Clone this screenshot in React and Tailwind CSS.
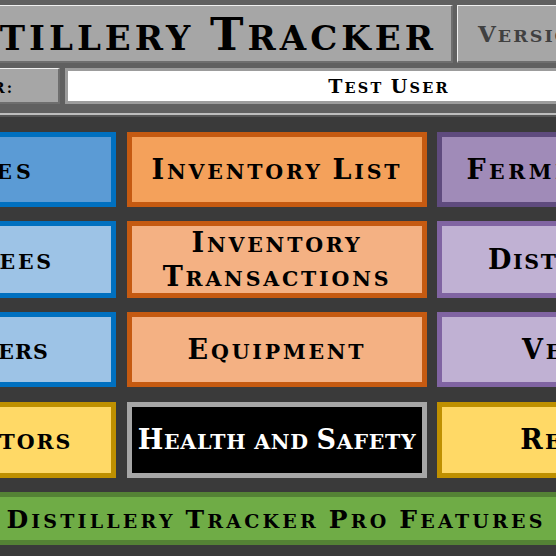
import React from 'react';

const serif = "font-['DejaVu_Serif',serif] font-bold";

// Copperplate-like small caps: first letter of a capitalised word is full size, the rest is uppercase at a smaller size
function SC({ text, big, small }) {
  const words = text.split(' ');
  return (
    <span>
      {words.map((w, i) => {
        const head = w[0] === w[0].toUpperCase() ? w[0] : '';
        const rest = head ? w.slice(1) : w;
        return (
          <React.Fragment key={i}>
            {i > 0 && <span className={small}> </span>}
            {head && <span className={big}>{head}</span>}
            <span className={`uppercase ${small}`}>{rest}</span>
          </React.Fragment>
        );
      })}
    </span>
  );
}

function Btn({ lines, cls, text = 'text-black', track = 'tracking-[2.8px]' }) {
  return (
    <div className={`h-full border-[5px] box-border flex flex-col items-center justify-center pt-[4px] text-center leading-[30px] whitespace-nowrap ${serif} ${text} ${track} ${cls}`}>
      {lines.map((l, i) => (
        <div key={i}><SC text={l} big="text-[27px]" small="text-[20.5px]" /></div>
      ))}
    </div>
  );
}

function Row({ h, mt, cells }) {
  return (
    <div className={`flex ${h} ${mt}`}>
      <div className="w-[301px] shrink-0">{cells[0]}</div>
      <div className="w-[300px] shrink-0 ml-[11px] mr-[10px]">{cells[1]}</div>
      <div className="w-[300px] shrink-0">{cells[2]}</div>
    </div>
  );
}

const raised = 'bg-[#a6a6a6] border-t border-l border-t-[#f0f0f0] border-l-[#f0f0f0] border-b-2 border-b-[#6e6e6e]';

export default function App() {
  return (
    <div className="w-[556px] h-[556px] overflow-hidden bg-[#3a3a3a]">
      {/* header band */}
      <div className="bg-[#606060] h-[113px] pt-[5px]">
        <div className="flex h-[58px]">
          <div className={`ml-[-140px] w-[593px] shrink-0 ${raised} border-r-2 border-r-[#6e6e6e] flex items-center justify-end pr-[14px] pt-[3px] whitespace-nowrap text-black tracking-[4px] ${serif}`}>
            <SC text="Distillery Tracker" big="text-[45px]" small="text-[34px]" />
          </div>
          <div className={`ml-[4px] w-[300px] shrink-0 ${raised} flex items-center pl-[20px] pt-[2px] whitespace-nowrap text-[#404040] tracking-[2px] ${serif}`}>
            <SC text="Version 2.0" big="text-[23px]" small="text-[17.5px]" />
          </div>
        </div>
        <div className="flex mt-[5px] h-[36px]">
          <div className={`ml-[-80px] w-[140px] shrink-0 ${raised} border-r-2 border-r-[#6e6e6e] flex items-center justify-end pr-[44px] pt-[1px] text-black tracking-[2px] ${serif}`}>
            <SC text="User:" big="text-[19px]" small="text-[14.5px]" />
          </div>
          <div className={`ml-[5px] w-[648px] shrink-0 bg-white border-[3px] border-[#9c9c9c] flex items-center justify-center pt-[1px] text-black tracking-[2.2px] ${serif}`}>
            <SC text="Test User" big="text-[19px]" small="text-[14.5px]" />
          </div>
        </div>
      </div>
      <div className="h-[2px] bg-[#bdbdbd]"></div>
      <div className="h-[2px] bg-[#555555]"></div>

      {/* menu */}
      <div className="ml-[-185px] w-[922px] pt-[15px]">
        <Row h="h-[75px]" mt="" cells={[
          <Btn lines={['Recipes']} cls="border-[#0070c0] bg-[#5b9bd5]" track="tracking-[4.2px]" />,
          <Btn lines={['Inventory List']} cls="border-[#c55a11] bg-[#f4a15b]" />,
          <Btn lines={['Fermentation']} cls="border-[#5f4b7e] bg-[#a08bb8]" track="tracking-[3.5px]" />,
        ]} />
        <Row h="h-[77px]" mt="mt-[14px]" cells={[
          <Btn lines={['Employees']} cls="border-[#0070c0] bg-[#9dc3e6]" />,
          <Btn lines={['Inventory', 'Transactions']} cls="border-[#c55a11] bg-[#f4b183] leading-[29px]" />,
          <Btn lines={['Distillation']} cls="border-[#8064a2] bg-[#c0b1d3]" track="tracking-[1.7px]" />,
        ]} />
        <Row h="h-[75px]" mt="mt-[14px]" cells={[
          <Btn lines={['Customers']} cls="border-[#0070c0] bg-[#9dc3e6]" track="tracking-[1px]" />,
          <Btn lines={['Equipment']} cls="border-[#c55a11] bg-[#f4b183]" />,
          <Btn lines={['Vessels']} cls="border-[#8064a2] bg-[#c0b1d3]" />,
        ]} />
        <Row h="h-[76px]" mt="mt-[15px]" cells={[
          <Btn lines={['Distributors']} cls="border-[#bf9000] bg-[#ffd966]" track="tracking-[2px]" />,
          <Btn lines={['Health and Safety']} cls="border-[#a6a6a6] bg-black" text="text-white" track="tracking-[0.7px]" />,
          <Btn lines={['Reports']} cls="border-[#bf9000] bg-[#ffd966]" track="tracking-[2.2px]" />,
        ]} />
        <div className={`mt-[14px] h-[53px] border-[5px] border-[#548235] bg-[#6fac46] flex items-center justify-center pt-[2px] whitespace-nowrap text-black tracking-[3.2px] ${serif}`}>
          <SC text="Distillery Tracker Pro Features" big="text-[25px]" small="text-[19px]" />
        </div>
      </div>
    </div>
  );
}
